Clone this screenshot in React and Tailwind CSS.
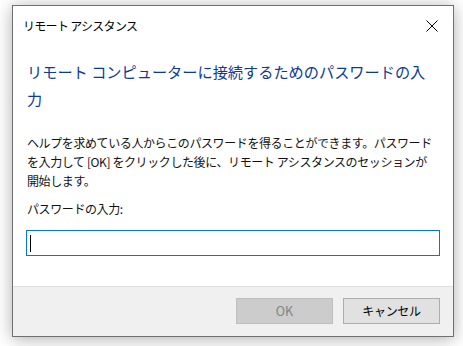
export default function App() {
  return (
    <div className="w-[463px] h-[346px] bg-white pl-[12px] pt-[5px] overflow-hidden font-['Noto_Sans_CJK_JP','Noto_Sans',sans-serif]">
      <div className="w-[442px] h-[332px] border border-[#707070] bg-white flex flex-col shadow-[0_2px_16px_rgba(0,0,0,0.32)]">
        <div className="h-[39px] flex items-center justify-between pl-[10px] pr-[14px] shrink-0">
          <span className="text-[12px] tracking-[-0.7px] text-black leading-none">リモート アシスタンス</span>
          <svg width="12" height="12" viewBox="0 0 12 12" className="mr-[1px]">
            <path d="M0.5 0.5 L11.5 11.5 M11.5 0.5 L0.5 11.5" stroke="#000" strokeWidth="1" fill="none" />
          </svg>
        </div>
        <div className="flex-1 flex flex-col pl-[14px] pr-[12px] pt-[13px]">
          <div className="text-[15.2px] leading-[27px] text-[#0a3a9c]">
            <div className="whitespace-nowrap">リモート コンピューターに接続するためのパスワードの入</div>
            <div className="whitespace-nowrap">力</div>
          </div>
          <div className="mt-[21px] text-[12px] tracking-[-0.4px] leading-[19px] text-[#111]">
            <div className="whitespace-nowrap">ヘルプを求めている人からこのパスワードを得ることができます。パスワード</div>
            <div className="whitespace-nowrap">を入力して [OK] をクリックした後に、リモート アシスタンスのセッションが</div>
            <div className="whitespace-nowrap">開始します。</div>
          </div>
          <div className="mt-[9px] text-[12px] tracking-[-0.4px] leading-[19px] text-[#111]">パスワードの入力:</div>
          <div className="mt-[12px] -ml-[1px] w-[414px] h-[26px] border border-[#0078d7] bg-white flex items-center pl-[3px]">
            <div className="w-[1px] h-[17px] bg-black"></div>
          </div>
        </div>
        <div className="h-[50px] shrink-0 border-t border-[#dfdfdf] bg-[#f0f0f0] flex justify-end items-start pt-[11px] pr-[13px] gap-[10px]">
          <div className="w-[97px] h-[26px] bg-[#cccccc] border border-[#bfbfbf] flex items-center justify-center text-[12.5px] text-[#838383]">OK</div>
          <div className="w-[97px] h-[26px] bg-[#e1e1e1] border border-[#adadad] flex items-center justify-center text-[12px] tracking-[-0.3px] text-black">キャンセル</div>
        </div>
      </div>
    </div>
  );
}
